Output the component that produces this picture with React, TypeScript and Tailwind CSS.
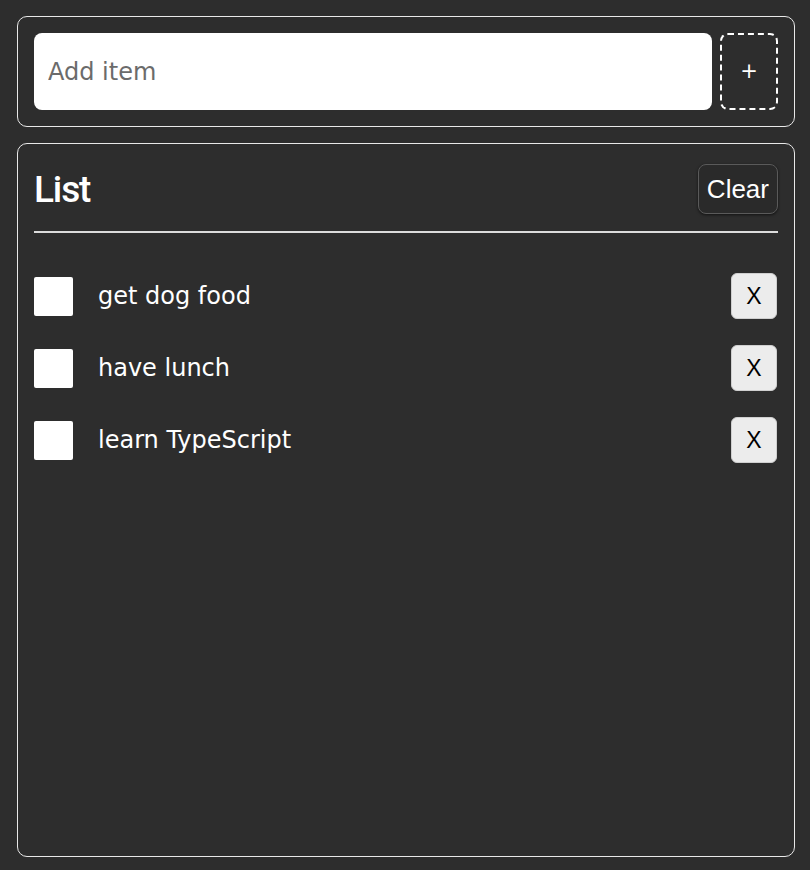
import React, { useState } from 'react';

type Item = { id: number; text: string; done: boolean };

const INITIAL: Item[] = [
  { id: 1, text: 'get dog food', done: false },
  { id: 2, text: 'have lunch', done: false },
  { id: 3, text: 'learn TypeScript', done: false },
];

const App: React.FC = () => {
  const [items, setItems] = useState<Item[]>(INITIAL);
  const [value, setValue] = useState('');

  const add = () => {
    if (!value.trim()) return;
    setItems(prev => [...prev, { id: Date.now(), text: value.trim(), done: false }]);
    setValue('');
  };

  return (
    <div className="w-[810px] h-[870px] bg-[#2d2d2d] pt-[16px] pb-[13px] pl-[17px] pr-[15px] flex flex-col gap-[16px] font-['DejaVu_Sans',sans-serif] text-white">
      <div className="border border-[#e8e8e8] rounded-[10px] p-4 flex gap-2">
        <input
          value={value}
          onChange={e => setValue(e.target.value)}
          placeholder="Add item"
          className="flex-1 h-[77px] bg-white rounded-[8px] px-[14px] text-[24px] text-black placeholder:text-[#6b6b6b] outline-none"
        />
        <button
          onClick={add}
          className="w-[58px] h-[77px] border-2 border-dashed border-white rounded-[8px] text-[21px] flex items-center justify-center"
        >
          +
        </button>
      </div>

      <div className="flex-1 border border-[#e8e8e8] rounded-[10px] px-4 pt-4">
        <div className="flex justify-between items-center pt-1">
          <h2 className="font-['Roboto',sans-serif] text-[37px] font-medium tracking-[-0.03em] leading-none">List</h2>
          <button
            onClick={() => setItems([])}
            className="h-[50px] px-[8px] border border-[#5a5a5a] rounded-[8px] bg-[#2a2a2a] shadow-[0_1px_3px_rgba(0,0,0,0.6)] font-['Liberation_Sans',sans-serif] text-[26px]"
          >
            Clear
          </button>
        </div>
        <hr className="mt-[17px] border-0 h-[2px] bg-[#dcdcdc]" />

        <ul className="mt-[40px] flex flex-col gap-[26px]">
          {items.map(item => (
            <li key={item.id} className="flex items-center h-[46px]">
              <input
                type="checkbox"
                checked={item.done}
                onChange={() => setItems(prev => prev.map(i => (i.id === item.id ? { ...i, done: !i.done } : i)))}
                className="appearance-none w-[39px] h-[39px] bg-white rounded-[2px] shrink-0"
              />
              <span className="ml-[25px] text-[24px] flex-1">{item.text}</span>
              <button
                onClick={() => setItems(prev => prev.filter(i => i.id !== item.id))}
                className="w-[46px] h-[46px] bg-[#ececec] rounded-[6px] border border-[#cfcfcf] text-black font-['Liberation_Sans',sans-serif] text-[23px] mr-[1px]"
              >
                X
              </button>
            </li>
          ))}
        </ul>
      </div>
    </div>
  );
};

export default App;
